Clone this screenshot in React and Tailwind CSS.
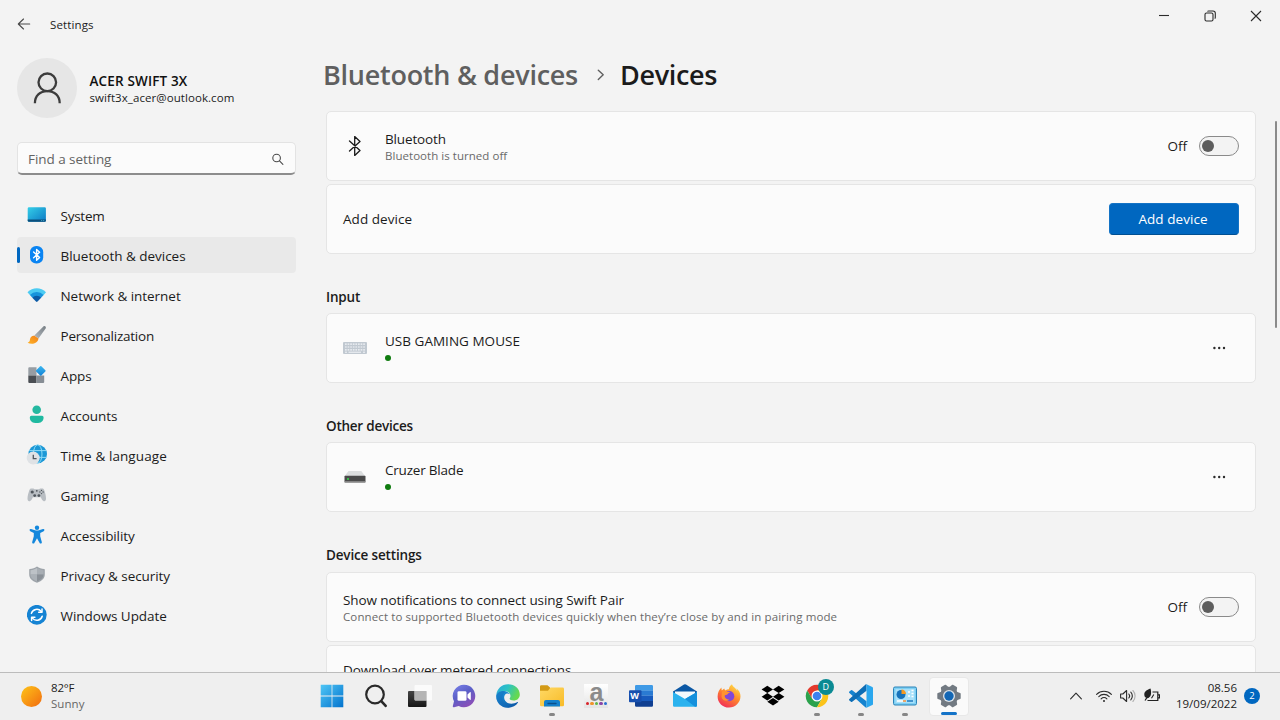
import React from "react";

const face = "font-['Open_Sans','Noto_Sans',sans-serif]";

function BackArrow() {
  return (
    <svg className="h-4 w-4" viewBox="0 0 16 16" fill="none" stroke="#4a4a4a" strokeWidth="1.1" strokeLinecap="round" strokeLinejoin="round">
      <path d="M13.7 8H2.5M7.5 3 2.3 8l5.2 5" />
    </svg>
  );
}

function SystemIcon() {
  return (
    <svg className="h-5 w-5" viewBox="0 0 20 20">
      <defs>
        <linearGradient id="sys" x1="0" y1="0" x2="1" y2="1">
          <stop offset="0" stopColor="#35cfe8" />
          <stop offset="1" stopColor="#0b78c4" />
        </linearGradient>
      </defs>
      <rect x="0.7" y="2.2" width="18.2" height="14.6" rx="1.3" fill="url(#sys)" />
      <path d="M.7 14.4h18.2v1.1a1.3 1.3 0 0 1-1.3 1.3H2a1.3 1.3 0 0 1-1.3-1.3z" fill="#0b4f7c" />
      <path d="M14.2 15.6h1M16.2 15.6h1" stroke="#58c8e8" strokeWidth=".8" />
    </svg>
  );
}

function BluetoothBadge() {
  return (
    <svg className="h-5 w-5" viewBox="0 0 20 20">
      <rect x="3" y="1" width="13.2" height="17.6" rx="6.2" fill="#0a84f2" />
      <path d="m6.6 6.9 6 5.5-3 2.8V4.5l3 2.7-6 5.5" fill="none" stroke="#fff" strokeWidth="1.4" strokeLinejoin="round" strokeLinecap="round" />
    </svg>
  );
}

function NetworkIcon() {
  return (
    <svg className="h-5 w-5" viewBox="0 0 20 20">
      <path d="M.5 7.2C5.6 2 13.9 2 19 7.2l-2.4 2.9H2.9z" fill="#4ccbf2" />
      <path d="M2.9 9.9a9.7 9.7 0 0 1 13.7 0l-2.5 2.9H5.4z" fill="#1793dc" />
      <path d="M5.3 12.7a6.3 6.3 0 0 1 8.9 0l-3.7 3.9q-.8.7-1.5 0z" fill="#0b5aa6" />
    </svg>
  );
}

function BrushIcon() {
  return (
    <svg className="h-5 w-5" viewBox="0 0 20 20">
      <defs>
        <linearGradient id="hnd" x1="1" y1="0" x2="0" y2="1">
          <stop offset="0" stopColor="#777e84" />
          <stop offset="1" stopColor="#b4bbc0" />
        </linearGradient>
        <linearGradient id="brs" x1="1" y1="0" x2="0" y2="1">
          <stop offset="0" stopColor="#f0801a" />
          <stop offset="1" stopColor="#ffb327" />
        </linearGradient>
      </defs>
      <path d="M16.4 1.4c1.3-.9 3.2.4 2.2 2L11.5 13.6l-4.2-3.1z" fill="url(#hnd)" />
      <path d="M7.5 10.7c-3.3 0-4.4 2.1-4.6 4.3-.1 1.5-1.1 2.3-2.3 2.7 3.4 1.9 10 1.5 10.9-4.2z" fill="url(#brs)" />
    </svg>
  );
}

function AppsIcon() {
  return (
    <svg className="h-5 w-5" viewBox="0 0 20 20">
      <defs>
        <linearGradient id="apd" x1="0" y1="0" x2="1" y2="1">
          <stop offset="0" stopColor="#3cb8f0" />
          <stop offset="1" stopColor="#1180d4" />
        </linearGradient>
      </defs>
      <path d="M1.3 3.2a1 1 0 0 1 1-1h7.2v8.2H1.3z" fill="#979da3" />
      <path d="M1.3 10.4h8.2v7.7H2.3a1 1 0 0 1-1-1z" fill="#4a4e53" />
      <path d="M9.5 10.4h7.7v6.7a1 1 0 0 1-1 1H9.5z" fill="#868d94" />
      <rect x="10.1" y="2.2" width="7.3" height="7.3" rx=".8" transform="rotate(45 13.75 5.85)" fill="url(#apd)" />
    </svg>
  );
}

function AccountsIcon() {
  return (
    <svg className="h-5 w-5" viewBox="0 0 20 20">
      <circle cx="9.7" cy="4.8" r="4.3" fill="#24b8a0" />
      <path d="M4.4 10.8h10.6a1.6 1.6 0 0 1 1.6 1.6c0 3.9-3 5.7-6.9 5.7s-6.9-1.8-6.9-5.7a1.6 1.6 0 0 1 1.6-1.6z" fill="#1fb9a0" />
    </svg>
  );
}

function TimeIcon() {
  return (
    <svg className="h-[22px] w-[22px]" viewBox="0 0 22 22">
      <circle cx="11.7" cy="10" r="9.3" fill="#1b98d6" />
      <g fill="none" stroke="#8fdcf7" strokeWidth="1">
        <ellipse cx="11.7" cy="10" rx="4.3" ry="9.2" />
        <path d="M3.2 6.6h17M3.2 13.4h17" />
      </g>
      <circle cx="7.2" cy="14" r="6.5" fill="#dfe2e5" />
      <path d="M7.3 10.8v3.8h3.3" fill="none" stroke="#50565c" strokeWidth="1.3" />
    </svg>
  );
}

function GamingIcon() {
  return (
    <svg className="h-5 w-5" viewBox="0 0 20 20">
      <path d="M4.3 3.4h2.2l1 .8h4.6l1-.8h2.2c1 0 1.5.6 1.9 1.7 1 2.8 1.8 6 1.8 8.5 0 3.3-2.5 3.3-4.1.8l-1.1-2.1H5.9l-1.2 2.1C3.1 16.9.5 16.9.5 13.6c0-2.5.9-5.7 1.9-8.5.4-1.1.9-1.7 1.9-1.7z" fill="#b9bec3" />
      <g fill="#50565c">
        <circle cx="5.2" cy="7" r="1.6" />
        <circle cx="7.7" cy="10.6" r="1.4" />
        <circle cx="11.9" cy="10.6" r="1.4" />
        <circle cx="9.8" cy="5.8" r=".9" />
        <circle cx="14.5" cy="5.4" r=".7" />
        <circle cx="14.5" cy="8.6" r=".7" />
        <circle cx="12.9" cy="7" r=".7" />
        <circle cx="16.1" cy="7" r=".7" />
      </g>
    </svg>
  );
}

function AccessibilityIcon() {
  return (
    <svg className="h-5 w-5" viewBox="0 0 20 20" fill="#1387dc">
      <circle cx="10" cy="2.7" r="2.2" />
      <path d="M4 4.1 8 5.3q2 .5 4 0l4-1.2c1.5-.4 2 1.5.7 2.1l-3.5 1.7v3.3l1.6 5.7c.4 1.7-1.8 2.3-2.3.8L10 13.2l-2.5 4.5c-.5 1.5-2.7.9-2.3-.8l1.6-5.7V7.9L3.3 6.2C2 5.6 2.5 3.7 4 4.1z" />
    </svg>
  );
}

function ShieldIcon() {
  return (
    <svg className="h-5 w-5" viewBox="0 0 20 20">
      <path d="M10 1.6c2.1 1.5 4.5 2.3 7.2 2.5.4 0 .6.3.6.6v4.5c0 3.9-2.6 6.7-7.8 8.6-5.2-1.9-7.8-4.7-7.8-8.6V4.7c0-.3.2-.6.6-.6 2.7-.2 5.1-1 7.2-2.5z" fill="#9da3a9" />
      <path d="M10 3c1.9 1.3 4.1 2 6.5 2.3v4.2H10z" fill="#a8aeb4" />
      <path d="M10 3C8.1 4.3 5.9 5 3.5 5.3v4.2H10z" fill="#bdc2c7" />
      <path d="M3.5 9.5H10v7c-4.3-1.7-6.4-3.9-6.5-7z" fill="#abb1b7" />
      <path d="M10 9.5h6.5c-.1 3.1-2.2 5.3-6.5 7z" fill="#8a9097" />
    </svg>
  );
}

function UpdateIcon() {
  return (
    <svg className="h-5 w-5" viewBox="0 0 20 20">
      <circle cx="9.8" cy="9.8" r="9.9" fill="#1583d3" />
      <g fill="none" stroke="#fff" strokeWidth="1.5" strokeLinecap="round" strokeLinejoin="round">
        <path d="M4.4 8.4a5.6 5.6 0 0 1 9.8-1.9M15.2 11.2a5.6 5.6 0 0 1-9.8 1.9" />
        <path d="M15 4v3.3h-3.3M4.6 15.6v-3.3h3.3" />
      </g>
    </svg>
  );
}

const nav = [
  { label: "System", icon: SystemIcon, fit: "tracking-[-0.25px]" },
  { label: "Bluetooth & devices", icon: BluetoothBadge, fit: "tracking-[-0.02px]", active: true },
  { label: "Network & internet", icon: NetworkIcon, fit: "tracking-[-0.04px]" },
  { label: "Personalization", icon: BrushIcon, fit: "tracking-[-0.22px]" },
  { label: "Apps", icon: AppsIcon, fit: "tracking-[-0.1px]" },
  { label: "Accounts", icon: AccountsIcon, fit: "tracking-[-0.08px]" },
  { label: "Time & language", icon: TimeIcon, fit: "tracking-[0.09px]" },
  { label: "Gaming", icon: GamingIcon, fit: "tracking-[-0.1px]" },
  { label: "Accessibility", icon: AccessibilityIcon, fit: "tracking-[-0.1px]" },
  { label: "Privacy & security", icon: ShieldIcon, fit: "tracking-[-0.06px]" },
  { label: "Windows Update", icon: UpdateIcon, fit: "tracking-[-0.07px]" },
];

function Sidebar() {
  return (
    <aside className="flex w-[296px] shrink-0 flex-col pl-[17px] pt-[10px]">
      <div className="flex h-[60px] items-center gap-3">
        <div className="flex h-[60px] w-[60px] items-center justify-center rounded-full bg-[#e6e6e6]">
          <svg className="h-8 w-7" viewBox="0 0 28 32" fill="none" stroke="#3c3c3c" strokeWidth="2.3">
            <circle cx="14.3" cy="10.3" r="8.8" />
            <path d="M1.9 31.2c0-7.5 5-12.1 12.4-12.1s12.4 4.6 12.4 12.1" />
          </svg>
        </div>
        <div className="pl-[0.5px]">
          <div className="text-[13.5px] font-semibold leading-[18px] tracking-[0.15px] text-[#101010]">ACER SWIFT 3X</div>
          <div className="text-[11.5px] leading-[15px] tracking-[0.07px] text-[#1b1b1b]">swift3x_acer@outlook.com</div>
        </div>
      </div>
      <div className="mt-6 flex h-[33px] items-center justify-between rounded-[5px] border border-b-2 border-[#e3e3e3] border-b-[#8c8c8c] bg-[#fbfbfb] pl-[10px] pr-[11.5px]">
        <span className="pt-[2px] text-[13.5px] tracking-[-0.05px] text-[#636363]">Find a setting</span>
        <svg className="mt-[2px] h-3 w-3" viewBox="0 0 12 12" fill="none" stroke="#4a4a4a" strokeWidth="1.1" strokeLinecap="round">
          <circle cx="4.6" cy="5" r="3.8" />
          <path d="m7.5 7.9 3.4 3.4" />
        </svg>
      </div>
      <nav className="mt-[22px] flex flex-col gap-1">
        {nav.map(({ label, icon: Icon, fit, active }) => (
          <div key={label} className={active ? "flex h-9 items-center rounded-[4px] bg-[#e9e9e9]" : "flex h-9 items-center"}>
            <span className={active ? "h-4 w-[3px] rounded-full bg-[#0067c0]" : "h-4 w-[3px]"} />
            <span className="flex w-[34px] items-center justify-center">
              <Icon />
            </span>
            <span className={"ml-[6.5px] pt-px text-[13.5px] leading-5 text-[#1b1b1b] " + fit}>{label}</span>
          </div>
        ))}
      </nav>
    </aside>
  );
}

function Toggle() {
  return (
    <div className="flex items-center gap-3">
      <span className="pt-px text-[13.5px] text-[#1b1b1b]">Off</span>
      <span className="flex h-5 w-10 items-center rounded-full border border-[#8a8a8a] bg-[#f3f3f3] pl-[2px]">
        <span className="h-3 w-3 rounded-full bg-[#5d5d5d]" />
      </span>
    </div>
  );
}

function Card({ children }) {
  return (
    <div className="flex h-[70px] shrink-0 items-center rounded-[5px] border border-[#e5e5e5] bg-[#fbfbfb] pl-4 pr-4">
      {children}
    </div>
  );
}

function Dots() {
  return (
    <svg className="mr-3 h-4 w-4" viewBox="0 0 16 16" fill="#2b2b2b">
      <circle cx="3.4" cy="8" r="1.2" />
      <circle cx="8.2" cy="8" r="1.2" />
      <circle cx="13" cy="8" r="1.2" />
    </svg>
  );
}

function DeviceCard({ icon, name, fit }) {
  return (
    <Card>
      <span className="flex w-6 items-center">{icon}</span>
      <div className="ml-[18px] flex-1 pb-[5px]">
        <div className={"text-[13.5px] leading-5 text-[#1b1b1b] " + fit}>{name}</div>
        <div className="mt-[4px] h-[6px] w-[6px] rounded-full bg-[#107c10]" />
      </div>
      <Dots />
    </Card>
  );
}

function KeyboardIcon() {
  const rows = [2.2, 5, 7.8];
  return (
    <svg className="h-3 w-6" viewBox="0 0 24 12">
      <rect width="24" height="12" rx="1" fill="#c1c9d1" />
      {rows.map((y) => (
        <path key={y} d={`M2 ${y}h20`} stroke="#f3f6f9" strokeWidth="1.2" strokeDasharray="1.7 .9" />
      ))}
      <path d="M2 10.2h2M5.5 10.2h12.5M20 10.2h2" stroke="#f3f6f9" strokeWidth="1" />
    </svg>
  );
}

function DriveIcon() {
  return (
    <svg className="h-3 w-6" viewBox="0 0 24 12">
      <path d="M5.5 0h12.8L22 5H1.8z" fill="#dcdedf" />
      <rect x="1.5" y="4.8" width="21" height="6.8" rx=".6" fill="#4a4a4a" />
      <path d="M2 10.6h20" stroke="#8a8a8a" strokeWidth="1" />
      <circle cx="5" cy="8" r="1.1" fill="#35d04a" />
    </svg>
  );
}

function Heading({ children, fit }) {
  return <h2 className={"mt-[32px] text-[13.5px] font-semibold leading-[22px] text-[#1b1b1b] " + fit}>{children}</h2>;
}

function Main() {
  return (
    <main className="ml-[30px] flex w-[930px] shrink-0 flex-col">
      <h1 className="-ml-[3px] mt-[7px] flex h-10 items-center text-[27px] font-semibold leading-10">
        <span className="tracking-[-0.26px] text-[#5f5f5f]">Bluetooth & devices</span>
        <svg className="ml-[19px] mr-[15px] h-3 w-2" viewBox="0 0 8 12" fill="none" stroke="#5f5f5f" strokeWidth="1.4" strokeLinecap="round" strokeLinejoin="round">
          <path d="m1.3 1.2 4.9 4.6-4.9 4.6" />
        </svg>
        <span className="tracking-[-0.35px] text-[#1b1b1b]">Devices</span>
      </h1>
      <div className="mt-4 flex flex-col gap-[3px]">
        <Card>
          <svg className="h-5 w-6" viewBox="0 0 24 20" fill="none" stroke="#1b1b1b" strokeWidth="1.3" strokeLinejoin="round" strokeLinecap="round">
            <path d="m6.5 5 10.5 9.5-5.3 5V.5l5.3 5L6.5 15" />
          </svg>
          <div className="ml-[18px] flex-1 pt-[2px]">
            <div className="text-[13.5px] leading-[18px] tracking-[-0.15px] text-[#1b1b1b]">Bluetooth</div>
            <div className="text-[11.5px] leading-4 tracking-[0.04px] text-[#6a6a6a]">Bluetooth is turned off</div>
          </div>
          <Toggle />
        </Card>
        <Card>
          <span className="flex-1 text-[13.5px] tracking-[0.05px] text-[#1b1b1b]">Add device</span>
          <button className="h-8 w-[130px] rounded-[4px] border border-[#1473c5] border-b-[#004f92] bg-[#0067c0] pr-[2px] text-[13.5px] tracking-[0.05px] text-white">Add device</button>
        </Card>
      </div>
      <Heading fit="mb-[5px] tracking-[-0.2px]">Input</Heading>
      <DeviceCard icon={<KeyboardIcon />} name="USB GAMING MOUSE" fit="tracking-[0.02px]" />
      <Heading fit="mb-[5px] tracking-[-0.24px]">Other devices</Heading>
      <DeviceCard icon={<DriveIcon />} name="Cruzer Blade" fit="tracking-[-0.2px]" />
      <Heading fit="mb-[6px] tracking-[-0.16px]">Device settings</Heading>
      <div className="flex flex-col gap-[3px]">
        <Card>
          <div className="flex-1 pt-[2px]">
            <div className="text-[13.5px] leading-[18px] tracking-[-0.08px] text-[#1b1b1b]">Show notifications to connect using Swift Pair</div>
            <div className="text-[11.5px] leading-4 tracking-[0.11px] text-[#6a6a6a]">Connect to supported Bluetooth devices quickly when they’re close by and in pairing mode</div>
          </div>
          <Toggle />
        </Card>
        <Card>
          <div className="-mt-[20px] text-[13.5px] leading-[18px] tracking-[-0.13px] text-[#1b1b1b]">Download over metered connections</div>
        </Card>
      </div>
    </main>
  );
}

function WindowsLogo() {
  return (
    <svg className="h-6 w-6" viewBox="0 0 24 24">
      <defs>
        <linearGradient id="win" gradientUnits="userSpaceOnUse" x1="0" y1="0" x2="24" y2="24">
          <stop offset="0" stopColor="#52c9f7" />
          <stop offset="1" stopColor="#0070cc" />
        </linearGradient>
      </defs>
      <path d="M.7.7h10.9v10.9H.7zM12.4.7h10.9v10.9H12.4zM.7 12.4h10.9v10.9H.7zM12.4 12.4h10.9v10.9H12.4z" fill="url(#win)" />
    </svg>
  );
}

function SearchLogo() {
  return (
    <svg className="h-6 w-6" viewBox="0 0 24 24" fill="none" strokeLinecap="round">
      <circle cx="11" cy="10.5" r="8.8" stroke="#2a2a2a" strokeWidth="2.2" />
      <path d="m17.5 17.3 4.2 4.6" stroke="#2a2a2a" strokeWidth="2.6" />
    </svg>
  );
}

function TaskView() {
  return (
    <svg className="h-6 w-6" viewBox="0 0 24 24">
      <defs>
        <linearGradient id="tvw" x1="0" y1="0" x2="0" y2="1">
          <stop offset="0" stopColor="#444" />
          <stop offset="1" stopColor="#161616" />
        </linearGradient>
      </defs>
      <rect x="0" y="7" width="18.5" height="16" rx="1" fill="url(#tvw)" />
      <rect x="6.5" y="1" width="17.5" height="15.5" rx="1" fill="#fff" fillOpacity=".75" />
      <path d="M6.5 7h12v9.5h-11a1 1 0 0 1-1-1z" fill="#b5b5b5" />
    </svg>
  );
}

function ChatLogo() {
  return (
    <svg className="h-6 w-6" viewBox="0 0 24 24">
      <defs>
        <linearGradient id="cht" x1="0" y1="0" x2=".6" y2="1">
          <stop offset="0" stopColor="#7b83eb" />
          <stop offset=".5" stopColor="#5b5fc7" />
          <stop offset="1" stopColor="#8a4fb8" />
        </linearGradient>
      </defs>
      <path d="M12 .7a11.3 11.3 0 1 1-5.3 21.3l-4.6 1.2c-.8.2-1.5-.5-1.3-1.3L2 17.3A11.3 11.3 0 0 1 12 .7z" fill="url(#cht)" />
      <rect x="5.5" y="7.3" width="9" height="9.4" rx="1.3" fill="#fff" />
      <path d="m15.5 10.6 2.4-2.3c.4-.4.9-.1.9.4v6.6c0 .5-.5.8-.9.4l-2.4-2.3z" fill="#fff" />
    </svg>
  );
}

function EdgeLogo() {
  return (
    <svg className="h-6 w-6" viewBox="0 0 24 24">
      <defs>
        <linearGradient id="edg1" x1="0" y1="0" x2="1" y2=".4">
          <stop offset="0" stopColor="#2aa8dd" />
          <stop offset=".5" stopColor="#2cc3c3" />
          <stop offset="1" stopColor="#66d94e" />
        </linearGradient>
        <linearGradient id="edg2" x1="0" y1="0" x2="1" y2="1">
          <stop offset="0" stopColor="#1b9de2" />
          <stop offset="1" stopColor="#0c4f9e" />
        </linearGradient>
      </defs>
      <path d="M.3 11C.8 4.8 5.8.2 12 .2c7 0 11.8 4.8 11.8 10.3 0 3.9-2.9 6-6 6-2.7 0-4.2-.9-4.2-1.7 0-.6.9-1 .9-2.8 0-2.4-2-4.7-5.2-4.7C5.2 7.3 1.5 8.8.3 11z" fill="url(#edg1)" />
      <path d="M.2 12.3C.2 9 3.5 6.9 7.3 6.9c3 0 5.6 1.4 6.5 3.3-.9-.7-2-1-3-.7-2.6.8-3.6 4.3-1.6 7.3 2.2 3.2 7.2 4.2 12.3 1.3.4-.2.7.1.5.5-2 3.2-5.4 5.2-10 5.2C5.3 23.8.2 18.9.2 12.3z" fill="url(#edg2)" />
      <path d="M9.6 7.4C6.8 9.4 5.6 13 6.9 16.7c1.2 3.4 4.2 6 8 6.7-1 .3-2 .4-2.9.4C5.3 23.8.2 18.9.2 12.3.2 9 3.5 6.9 7.3 6.9z" fill="#1368b8" fillOpacity=".45" />
    </svg>
  );
}

function FolderLogo() {
  return (
    <svg className="h-6 w-6" viewBox="0 0 24 24">
      <defs>
        <linearGradient id="fld" x1="0" y1="0" x2="1" y2="1">
          <stop offset="0" stopColor="#ffd965" />
          <stop offset="1" stopColor="#f8bb28" />
        </linearGradient>
      </defs>
      <path d="M0 2.6a1.3 1.3 0 0 1 1.3-1.3h6.2L10 3.6V9H0z" fill="#d39a16" />
      <path d="M0 6.7h8l2.5-3.1h12.2A1.3 1.3 0 0 1 24 4.9v16a1.3 1.3 0 0 1-1.3 1.3H1.3A1.3 1.3 0 0 1 0 20.9z" fill="url(#fld)" />
      <path d="M4 22.5V18a2 2 0 0 1 2-2h12a2 2 0 0 1 2 2v4.5z" fill="#1480cc" />
      <path d="M8 19.5h8" stroke="#0a4f8c" strokeWidth="1.3" strokeLinecap="round" />
    </svg>
  );
}

function AmazonLogo() {
  return (
    <div className="flex h-6 w-6 flex-col items-center bg-gradient-to-b from-white to-[#e4e4e4]">
      <span className="h-[17px] font-['Liberation_Sans',sans-serif] text-[25px] font-bold leading-[16px] text-[#8b8b8b]">a</span>
      <span className="flex gap-px pt-[1px]">
        <i className="h-[3.5px] w-[3.5px] rounded-full bg-[#d8232a]" />
        <i className="h-[3.5px] w-[3.5px] rounded-full bg-[#f0932a]" />
        <i className="h-[3.5px] w-[3.5px] rounded-full bg-[#5fb548]" />
        <i className="h-[3.5px] w-[3.5px] rounded-full bg-[#8a45a8]" />
        <i className="h-[3.5px] w-[3.5px] rounded-full bg-[#2a6fd0]" />
      </span>
    </div>
  );
}

function WordLogo() {
  return (
    <div className="relative h-6 w-6">
      <svg className="h-6 w-6" viewBox="0 0 24 24">
        <path d="M6 2.2A1.2 1.2 0 0 1 7.2 1h15.6A1.2 1.2 0 0 1 24 2.2v4.6H6z" fill="#3f9ae6" />
        <path d="M6 6.6h18v5.2H6z" fill="#2a7ad2" />
        <path d="M6 11.8h18V17H6z" fill="#185abd" />
        <path d="M6 17h18v4.6a1.2 1.2 0 0 1-1.2 1.2H7.2A1.2 1.2 0 0 1 6 21.6z" fill="#103f91" />
        <rect x="0" y="6.2" width="12.5" height="12" rx="1" fill="#174fae" />
      </svg>
      <span className="absolute left-0 top-[6px] w-3 text-center text-[9px] font-bold leading-3 text-white">W</span>
    </div>
  );
}

function MailLogo() {
  return (
    <svg className="h-6 w-6" viewBox="0 0 24 24">
      <path d="M0 7.5 11 .6q1-.6 2 0l11 6.9v2H0z" fill="#0b57a4" />
      <path d="M2 7.5h20V12l-10 4-10-4z" fill="#f4f9fd" />
      <path d="M0 8l12 7L24 8v13.5a1.2 1.2 0 0 1-1.2 1.2H1.2A1.2 1.2 0 0 1 0 21.5z" fill="#2bb2ee" />
      <path d="M24 8v13.5a1.2 1.2 0 0 1-1.2 1.2H22L12 15z" fill="#1590dc" />
    </svg>
  );
}

function FirefoxLogo() {
  return (
    <svg className="h-6 w-6" viewBox="0 0 24 24">
      <defs>
        <linearGradient id="ffx" x1=".8" y1="0" x2=".2" y2="1">
          <stop offset="0" stopColor="#ffe14a" />
          <stop offset=".45" stopColor="#ff8a2a" />
          <stop offset="1" stopColor="#f0265c" />
        </linearGradient>
      </defs>
      <path d="M22.7 8.5c-.8-2-2.5-3.6-3.3-4 .5 1 .7 1.6.8 2.3C18.5 3.5 15.8 3 15 .3c-2.3 1.4-3 3.8-3.1 5-1.3.1-2.5.5-3.5 1.1-.6-.4-1-1.3-1.1-2-1 .5-1.8 1.3-2.4 2-.4-.5-.5-1.9-.3-2.8C2.5 5 .6 8.4.6 12.5c0 6.3 5.1 11.1 11.4 11.1S23.5 18.6 23.5 12.3c0-1.4-.3-2.7-.8-3.8z" fill="url(#ffx)" />
      <circle cx="12.2" cy="12.2" r="5.1" fill="#8148d8" />
      <path d="M5 7.5c2-1.3 4.3-.7 5.3.2 1.2-.1 2.2 0 3 .8-1 .3-2.9 1.3-2.9 2-.5.6-2.6.3-2.8 1.3 0 2.3 2.4 4.1 4.8 3.9-2.7 2.2-7.4.8-7.9-3z" fill="#ff9330" />
    </svg>
  );
}

function DropboxLogo() {
  return (
    <svg className="h-6 w-6" viewBox="0 0 24 24" fill="#000">
      <path d="m6.3 1.7 5.7 3.7-5.7 3.7L.6 5.4zM17.7 1.7l5.7 3.7-5.7 3.7L12 5.4zM.6 12.8l5.7-3.7 5.7 3.7-5.7 3.7zM17.7 9.1l5.7 3.7-5.7 3.7-5.7-3.7zM6.3 17.8l5.7-3.7 5.7 3.7L12 21.5z" />
    </svg>
  );
}

function ChromeLogo() {
  return (
    <div className="relative h-6 w-6">
      <svg className="h-6 w-6" viewBox="0 0 24 24">
        <path d="M12 .7a11.3 11.3 0 0 0-9.8 5.7L7.1 14.9 12 6.4h9.8A11.3 11.3 0 0 0 12 .7z" fill="#e33b2e" />
        <path d="M2.2 6.4a11.3 11.3 0 0 0 9.8 16.9l4.9-8.5H7.1z" fill="#2ba24c" />
        <path d="M21.8 6.4H12l4.9 8.4-4.9 8.5a11.3 11.3 0 0 0 9.8-16.9z" fill="#fbc31a" />
        <circle cx="12" cy="12" r="5.5" fill="#fff" />
        <circle cx="12" cy="12" r="4.3" fill="#3c82f0" />
      </svg>
      <span className="absolute -top-[5px] left-[13px] flex h-4 w-4 items-center justify-center rounded-full bg-[#0b8a93] text-[9px] leading-4 text-white">D</span>
    </div>
  );
}

function CodeLogo() {
  return (
    <svg className="h-6 w-6" viewBox="0 0 24 24">
      <path d="m17.5 17.2-14.3-11a1 1 0 0 0-1.2 0L.4 7.5c-.5.4-.5 1.1 0 1.5L16.3 23.3c.4.3.8.5 1.2.4z" fill="#1583cf" />
      <path d="m17.5 6.8-14.3 11a1 1 0 0 1-1.2 0L.4 16.5c-.5-.4-.5-1.1 0-1.5L16.3.7c.4-.3.8-.5 1.2-.4z" fill="#0d6db5" />
      <path d="M17.5.3 23.3 3c.4.2.7.6.7 1.1v15.8c0 .5-.3.9-.7 1.1l-5.8 2.7z" fill="#2aa7ee" />
    </svg>
  );
}

function ControlPanelLogo() {
  return (
    <svg className="h-6 w-6" viewBox="0 0 24 24">
      <rect x=".5" y="3" width="23" height="18" rx="1.5" fill="#7fd0f4" stroke="#2a83b8" />
      <rect x="2.5" y="5" width="19" height="14" fill="#a9e1fa" />
      <circle cx="8" cy="10.5" r="4.5" fill="#1673bb" />
      <path d="M8.5 10V5.5A4.5 4.5 0 0 1 13 10z" fill="#f59a23" />
      <path d="M15 8h2M15 12h2M18.5 6.5h2M18.5 9.5h2M18.5 12.5h2M4 17h9" stroke="#fff" strokeWidth="1.3" />
      <path d="M14 17h6" stroke="#1673bb" strokeWidth="1.4" />
      <path d="M10 17h3" stroke="#e8842a" strokeWidth="1.4" />
    </svg>
  );
}

function SettingsLogo() {
  const teeth = [0, 60, 120, 180, 240, 300];
  return (
    <svg className="h-6 w-6" viewBox="0 0 24 24">
      <g fill="#727a82">
        <circle cx="12" cy="12" r="9.2" />
        {teeth.map((a) => (
          <path key={a} d="M7.5 5 9 .9q.2-.5.8-.6h4.4q.6.1.8.6L16.5 5z" transform={`rotate(${a + 30} 12 12)`} />
        ))}
      </g>
      <circle cx="12" cy="12" r="6" fill="#dce3e9" />
      <circle cx="12" cy="12" r="4.7" fill="#1266b4" />
    </svg>
  );
}

const tasks = [
  { id: "start", icon: WindowsLogo },
  { id: "search", icon: SearchLogo },
  { id: "views", icon: TaskView },
  { id: "chat", icon: ChatLogo },
  { id: "edge", icon: EdgeLogo },
  { id: "files", icon: FolderLogo, running: true },
  { id: "shop", icon: AmazonLogo },
  { id: "word", icon: WordLogo },
  { id: "mail", icon: MailLogo },
  { id: "firefox", icon: FirefoxLogo },
  { id: "dropbox", icon: DropboxLogo },
  { id: "chrome", icon: ChromeLogo, running: true },
  { id: "code", icon: CodeLogo, running: true },
  { id: "panel", icon: ControlPanelLogo, running: true },
  { id: "settings", icon: SettingsLogo, current: true },
];

function Taskbar() {
  return (
    <footer className="flex h-12 shrink-0 items-center border-t border-[#bcbcbc] bg-[#efefef] pb-px">
      <div className="flex w-[312.2px] items-center pl-[21px]">
        <span className="h-[21px] w-[21px] rounded-full bg-gradient-to-br from-[#fcc419] to-[#f0690f]" />
        <div className="ml-[9px] text-[11.5px] leading-4">
          <div className="tracking-[-0.2px] text-[#1b1b1b]">82°F</div>
          <div className="tracking-[0.05px] text-[#666]">Sunny</div>
        </div>
      </div>
      <div className="flex gap-[4.05px]">
        {tasks.map(({ id, icon: Icon, running, current }) => (
          <div
            key={id}
            className={
              current
                ? "flex h-[39px] w-10 flex-col items-center justify-between rounded-[4px] border border-[#e8e8e8] bg-[#fafafa] pt-[6px]"
                : "flex h-[39px] w-10 flex-col items-center justify-between pt-[7px]"
            }
          >
            <Icon />
            {running && <span className="h-[3px] w-[6px] rounded-full bg-[#868686]" />}
            {current && <span className="h-[3px] w-4 rounded-full bg-[#1473c8]" />}
          </div>
        ))}
      </div>
      <div className="ml-auto flex items-center pr-5">
        <svg className="h-3 w-3" viewBox="0 0 12 12" fill="none" stroke="#2b2b2b" strokeWidth="1.1" strokeLinecap="round" strokeLinejoin="round">
          <path d="M.6 8.8 6 3.2l5.4 5.6" />
        </svg>
        <svg className="ml-[14px] h-4 w-4" viewBox="0 0 16 16" fill="none" stroke="#2b2b2b" strokeWidth="1.1" strokeLinecap="round">
          <path d="M.6 6.3a10.5 10.5 0 0 1 14.8 0M2.8 8.6a7.3 7.3 0 0 1 10.4 0M5.1 10.8a4.2 4.2 0 0 1 5.8 0" />
          <circle cx="8" cy="13" r="1" fill="#2b2b2b" stroke="none" />
        </svg>
        <svg className="ml-2 h-4 w-4" viewBox="0 0 16 16" fill="none" stroke="#2b2b2b" strokeWidth="1.1" strokeLinecap="round" strokeLinejoin="round">
          <path d="M.6 6v4h2.2L6.6 13.5v-11L2.8 6z" />
          <path d="M8.8 6a3 3 0 0 1 0 4M10.8 4.2a5.5 5.5 0 0 1 0 7.6" />
          <path d="M12.9 2.5a8 8 0 0 1 0 11" stroke="#b0b0b0" />
        </svg>
        <svg className="ml-2 h-4 w-4" viewBox="0 0 16 16" fill="none" stroke="#222" strokeWidth="1.2">
          <path d="M8.5 4h5.3v8.500H3.5M14 6.8h1.6v3H14" />
          <path d="M6.5.5C2.5 2 .3 3.5.3 6.7c0 2.8 2.5 3.9 4.4 3C7.5 8.5 7.5 4 6.5.5z" fill="#222" stroke="none" />
          <path d="M1 12.5c1-2 2-3 3.5-4M9.8 6.500 7.500 10.200" strokeWidth="1.1" />
        </svg>
        <div className="ml-[15px] w-[62px] whitespace-nowrap text-right text-[11.5px] leading-4 text-[#1b1b1b]">
          <div>08.56</div>
          <div>19/09/2022</div>
        </div>
        <span className="ml-[7px] flex h-4 w-4 items-center justify-center rounded-full bg-[#0067c0] text-[9.5px] leading-4 text-white">2</span>
      </div>
    </footer>
  );
}

export default function App() {
  return (
    <div className={"flex h-[720px] w-[1280px] flex-col overflow-hidden bg-[#f3f3f3] " + face}>
      <header className="flex h-12 shrink-0 items-center pl-4">
        <BackArrow />
        <span className="ml-[18px] pt-[2px] text-[11.5px] tracking-[0.12px] text-[#1b1b1b]">Settings</span>
        <div className="ml-auto flex h-8 items-center gap-[34px] self-start pr-[18px]">
          <svg className="h-3 w-3" viewBox="0 0 12 12" stroke="#2b2b2b" strokeWidth="1.1">
            <path d="M1 5.5h10" />
          </svg>
          <svg className="h-3 w-3" viewBox="0 0 12 12" fill="none" stroke="#2b2b2b" strokeWidth="1.1">
            <rect x="1" y="3" width="8" height="8" rx="1.5" />
            <path d="M3.5 1.5q.3-.5 1-.5H9a2.3 2.3 0 0 1 2.3 2.3v4.2q0 .7-.6 1" />
          </svg>
          <svg className="h-3 w-3" viewBox="0 0 12 12" stroke="#2b2b2b" strokeWidth="1.1">
            <path d="m1 1 10 10M11 1 1 11" />
          </svg>
        </div>
      </header>
      <div className="flex min-h-0 flex-1 overflow-hidden">
        <Sidebar />
        <Main />
        <div className="ml-auto mr-[3px] mt-[73px] h-[207px] w-[2px] rounded-full bg-[#8a8a8a]" />
      </div>
      <Taskbar />
    </div>
  );
}
